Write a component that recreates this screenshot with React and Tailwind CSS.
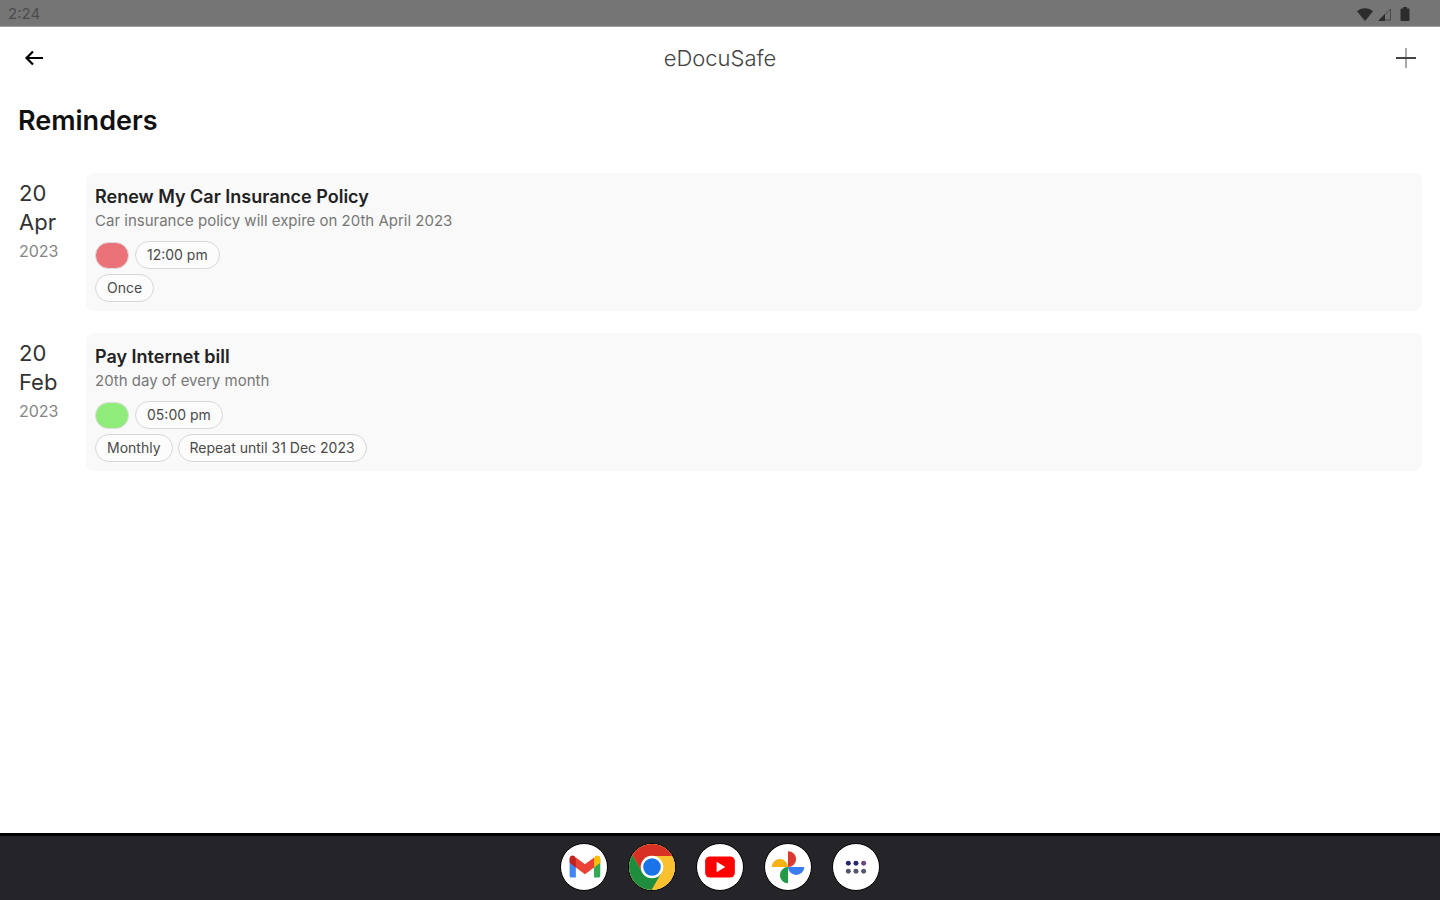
const reminders = [
  {
    day: '20',
    month: 'Apr',
    year: '2023',
    title: 'Renew My Car Insurance Policy',
    note: 'Car insurance policy will expire on 20th April 2023',
    dot: 'bg-[#ec7279]',
    time: '12:00 pm',
    tags: ['Once'],
  },
  {
    day: '20',
    month: 'Feb',
    year: '2023',
    title: 'Pay Internet bill',
    note: '20th day of every month',
    dot: 'bg-[#8fec7a]',
    time: '05:00 pm',
    tags: ['Monthly', 'Repeat until 31 Dec 2023'],
  },
];

function StatusBar() {
  return (
    <div className="flex h-[27px] items-center justify-between border-b border-[#a0a0a0] bg-[#757575] pt-0.5 pr-[30px] pl-2 text-[#4c4c4c]">
      <span className="text-[15px]">2:24</span>
      <div className="flex items-center gap-1 text-[#2c2c2c]">
        <svg className="h-3.5 w-[18px]" viewBox="0 0 18 14" fill="currentColor" aria-hidden="true">
          <path d="M9 14 1 4.2C5.200 .2 12.800 .2 17 4.200Z" />
        </svg>
        <svg className="h-3.5 w-3.5" viewBox="0 0 14 14" aria-hidden="true">
          <path d="M1.500 13 12.500 2v11Z" fill="none" stroke="currentColor" strokeOpacity=".6" />
          <path d="M0 14 7 7v7Z" fill="currentColor" />
        </svg>
        <svg className="ml-1 h-3.5 w-[10px]" viewBox="0 0 10 14" fill="currentColor" aria-hidden="true">
          <path d="M3 0h4v1.500h1.500q1 0 1 1V13q0 1-1 1h-7q-1 0-1-1V2.500q0-1 1-1H3Z" />
        </svg>
      </div>
    </div>
  );
}

function Pill({ children }) {
  return (
    <span className="flex h-7 items-center rounded-full border border-[#d8d8d8] bg-[#fcfcfc] px-[11px] text-sm text-[#4a4a4a]">
      {children}
    </span>
  );
}

function Reminder({ item }) {
  return (
    <li className="flex">
      <div className="w-[86px] shrink-0 pt-1.5 pl-[19px] text-[22px] leading-[29px] text-[#333]">
        <div>{item.day}</div>
        <div>{item.month}</div>
        <div className="text-base leading-[29px] text-[#858585]">{item.year}</div>
      </div>
      <article className="min-w-0 flex-1 rounded-lg bg-[#f9f9f9] px-[9px] pt-3 pb-[9px]">
        <h2 className="text-lg leading-6 font-semibold text-[#222]">{item.title}</h2>
        <p className="text-[15px] leading-6 text-[#777]">{item.note}</p>
        <div className="mt-2 flex items-center gap-[6px]">
          <span className={`h-[27px] w-[34px] rounded-full border border-[#ddd] ${item.dot}`} />
          <Pill>{item.time}</Pill>
        </div>
        <div className="mt-[5px] flex gap-[5px]">
          {item.tags.map((tag) => (
            <Pill key={tag}>{tag}</Pill>
          ))}
        </div>
      </article>
    </li>
  );
}

function Gmail() {
  return (
    <svg viewBox="0 0 48 48" className="size-full" aria-hidden="true">
      <path d="M9 15v18q0 2 2 2h4.500V20Z" fill="#4285f4" />
      <path d="M41 15v18q0 2-2 2h-4.500V20Z" fill="#34a853" />
      <path d="M34 15.500V25l7-5.500V15q-.5-4-5-2.500Z" fill="#fbbc04" />
      <path d="M16 15.500V25l-7-5.500V15q.5-4 5-2.500Z" fill="#c5221f" />
      <path d="M15.500 24.500V14l9.500 7 9.500-7v10.500L25 31.500Z" fill="#ea4335" />
    </svg>
  );
}

function Chrome() {
  return (
    <svg viewBox="0 0 48 48" className="size-full" aria-hidden="true">
      <rect width="48" height="48" fill="#fbc02d" />
      <path d="M14 29.800 0 5.500V0h48v12.500H24Z" fill="#d93025" />
      <path d="M0 5.500V48h23.500L34 29.800H14Z" fill="#1e8e3e" />
      <circle cx="24" cy="24" r="11.800" fill="#fff" />
      <circle cx="24" cy="24" r="9.200" fill="#1a73e8" />
    </svg>
  );
}

function YouTube() {
  return (
    <svg viewBox="0 0 48 48" className="size-full" aria-hidden="true">
      <rect x="8.500" y="13" width="31" height="22" rx="5" fill="#f00" />
      <path d="m20.500 18.500 9 5.500-9 5.500Z" fill="#fff" />
    </svg>
  );
}

function Photos() {
  return (
    <svg viewBox="0 0 48 48" className="size-full" aria-hidden="true">
      <path d="M24 7.500a8.500 8.250 0 0 1 0 16.500Z" fill="#dc3a30" />
      <path d="M41 24a8.500 8.250 0 0 1-17 0Z" fill="#3b7cf0" />
      <path d="M24 41a8.500 8.500 0 0 1 0-17Z" fill="#249a48" />
      <path d="M7 24a8.500 8.250 0 0 1 17 0Z" fill="#f5b316" />
    </svg>
  );
}

function AllApps() {
  return (
    <svg viewBox="0 0 48 48" className="size-full" aria-hidden="true">
      <g fill="#28286e">
        <circle cx="16" cy="20" r="2.600" />
        <circle cx="24" cy="20" r="2.600" />
        <circle cx="32" cy="20" r="2.600" fill="#6a4580" />
      </g>
      <g fill="#55566e">
        <circle cx="16" cy="28.500" r="2.600" />
        <circle cx="24" cy="28.500" r="2.600" />
        <circle cx="32" cy="28.500" r="2.600" />
      </g>
    </svg>
  );
}

const apps = [
  { name: 'Gmail', Icon: Gmail },
  { name: 'Chrome', Icon: Chrome },
  { name: 'YouTube', Icon: YouTube },
  { name: 'Photos', Icon: Photos },
  { name: 'All apps', Icon: AllApps },
];

export default function App() {
  return (
    <div className="flex min-h-screen flex-col bg-white font-['Inter',sans-serif]">
      <StatusBar />
      <header className="grid h-[62px] grid-cols-[1fr_auto_1fr] items-center px-[22px]">
        <button aria-label="Back" className="flex size-6 items-center justify-center text-black">
          <svg className="size-5" viewBox="0 0 20 20" fill="none" stroke="currentColor" strokeWidth="2.200" aria-hidden="true">
            <path d="M19 10H3M9 3.500 2.500 10 9 16.500" />
          </svg>
        </button>
        <div className="text-[22px] font-light text-[#444]">eDocuSafe</div>
        <button aria-label="Add reminder" className="flex size-6 items-center justify-center justify-self-end">
          <svg className="size-5" viewBox="0 0 20 20" fill="none" strokeWidth="2" aria-hidden="true">
            <path d="M10 0v20" stroke="#aaa" />
            <path d="M0 10h20" stroke="#444" />
          </svg>
        </button>
      </header>
      <main className="flex-1">
        <h1 className="px-[18px] pt-3.5 text-[27px] leading-9 font-semibold text-[#111]">Reminders</h1>
        <ul className="mt-[34px] flex flex-col gap-[22px] pr-[18px]">
          {reminders.map((item) => (
            <Reminder key={item.title} item={item} />
          ))}
        </ul>
      </main>
      <nav className="flex h-[67px] items-center justify-center gap-5 border-t-[3px] border-black bg-[#252429] pb-0.5">
        {apps.map(({ name, Icon }) => (
          <button
            key={name}
            aria-label={name}
            className="size-12 overflow-hidden rounded-full border border-black bg-white"
          >
            <Icon />
          </button>
        ))}
      </nav>
    </div>
  );
}
